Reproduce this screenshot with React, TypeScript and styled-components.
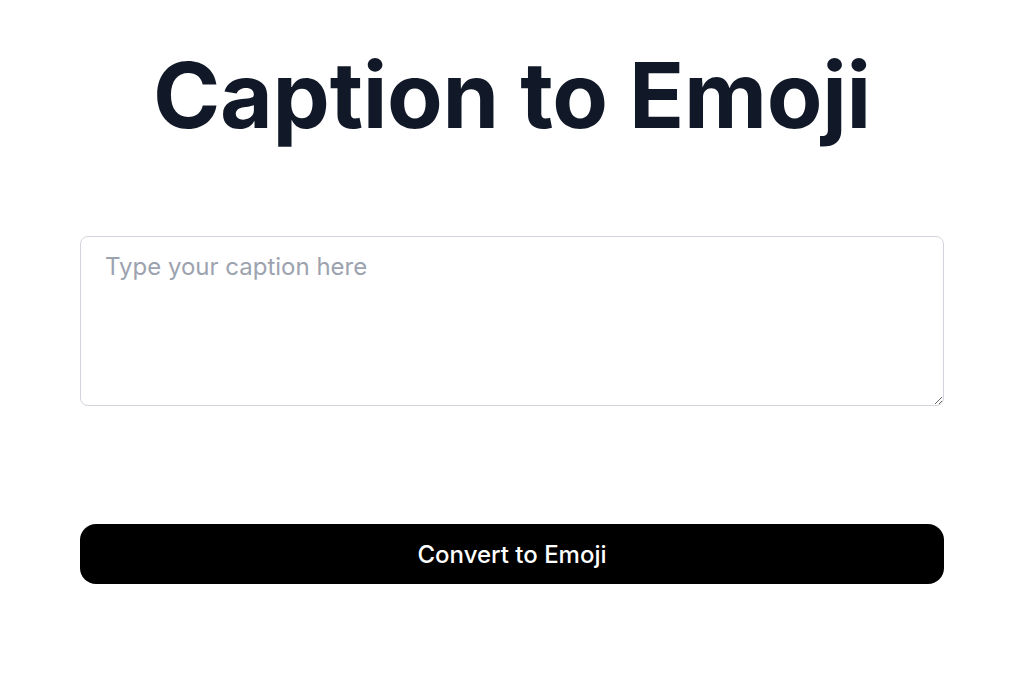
import React from "react";
import styled, { createGlobalStyle } from "styled-components";

const Global = createGlobalStyle`
  html, body { margin: 0; padding: 0; background: #ffffff; }
  body { font-family: Inter, "Noto Sans", sans-serif; }
`;

const Page = styled.main`
  width: 864px;
  padding: 40px 0 0 80px;
  display: flex;
  flex-direction: column;
  align-items: stretch;
`;

const Title = styled.h1`
  margin: 0;
  text-align: center;
  font-size: 91px;
  font-weight: 700;
  line-height: 110px;
  color: #111827;
  letter-spacing: -0.3px;
`;

const Caption = styled.textarea`
  margin-top: 86px;
  box-sizing: border-box;
  width: 864px;
  height: 170px;
  padding: 14px 24px;
  border: 1px solid #d1d5db;
  border-radius: 8px;
  font-family: Inter, sans-serif;
  font-size: 24px;
  line-height: 32px;
  color: #111827;
  outline: none;
  &::placeholder { color: #9ca3af; }
`;

const Convert = styled.button`
  margin-top: 118px;
  height: 60px;
  width: 864px;
  border: none;
  border-radius: 16px;
  background: #000000;
  color: #ffffff;
  font-family: Inter, sans-serif;
  font-size: 24px;
  font-weight: 500;
  cursor: pointer;
`;

export default function App() {
  return (
    <>
      <Global />
      <Page>
        <Title>Caption to Emoji</Title>
        <Caption placeholder="Type your caption here" />
        <Convert>Convert to Emoji</Convert>
      </Page>
    </>
  );
}
